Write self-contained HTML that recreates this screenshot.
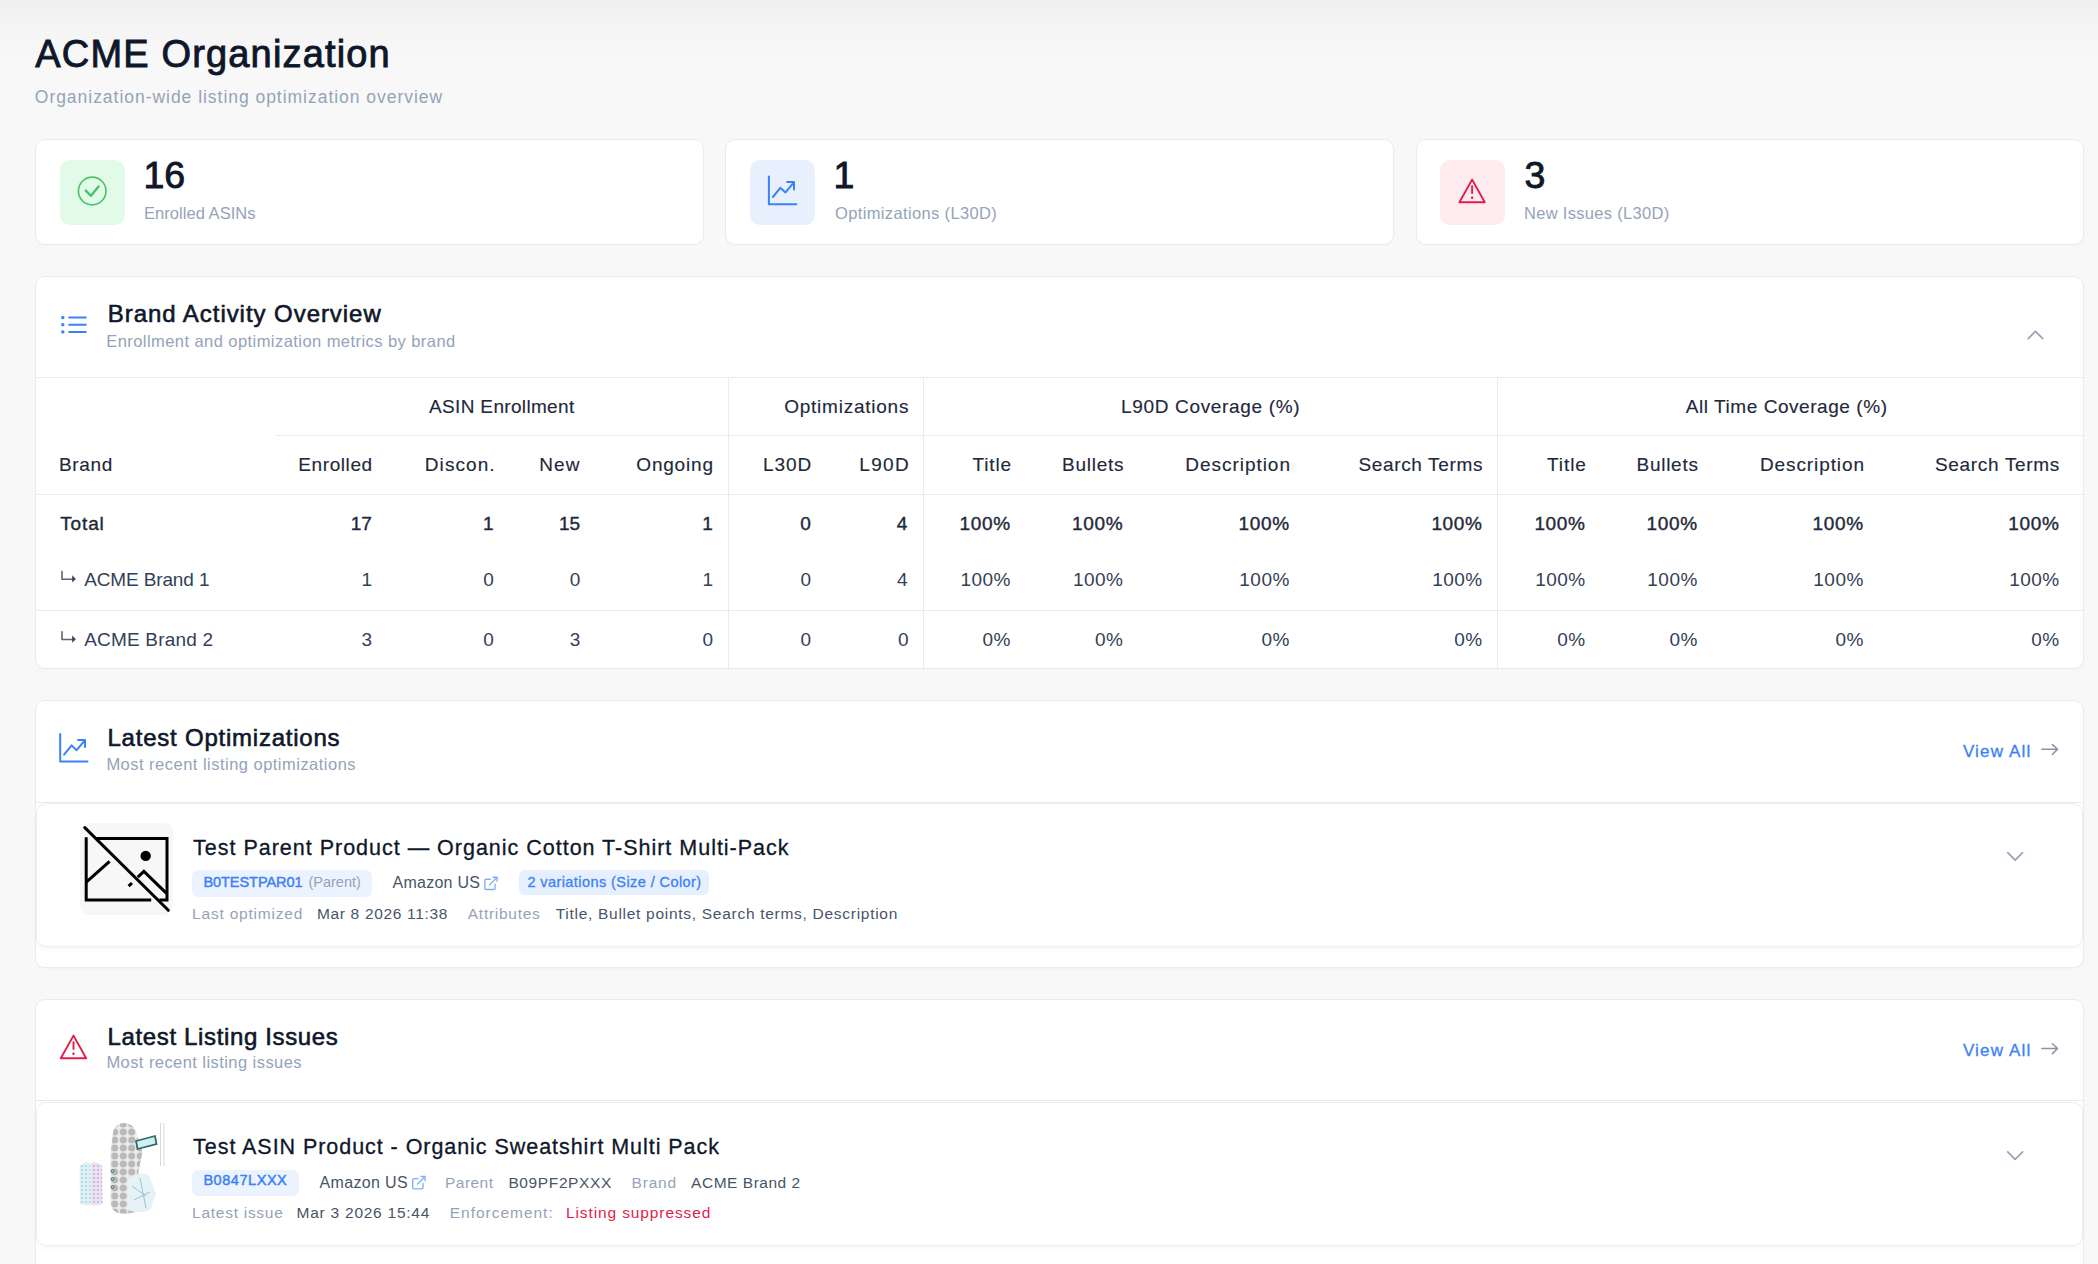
<!DOCTYPE html>
<html><head><meta charset="utf-8"><title>ACME Organization</title>
<style>
html,body{margin:0;padding:0;}
body{width:2098px;height:1264px;overflow:hidden;position:relative;font-family:"Liberation Sans", sans-serif;
background:linear-gradient(to bottom,#efeff0 0px,#f5f5f6 30px,#f8f8f8 60px,#f8f8f8 100%);}
.b{position:absolute;box-sizing:border-box;}
.t{position:absolute;white-space:nowrap;font-family:"Liberation Sans", sans-serif;}
.ov{position:absolute;left:0;top:0;}
</style></head><body>
<div class="b" style="left:35px;top:139px;width:668.5px;height:105.5px;background:#fff;border:1px solid #eaebef;border-radius:10px;box-sizing:border-box;box-shadow:0 1px 2px rgba(0,0,0,0.025);"></div><div class="b" style="left:725px;top:139px;width:669px;height:105.5px;background:#fff;border:1px solid #eaebef;border-radius:10px;box-sizing:border-box;box-shadow:0 1px 2px rgba(0,0,0,0.025);"></div><div class="b" style="left:1416px;top:139px;width:668px;height:105.5px;background:#fff;border:1px solid #eaebef;border-radius:10px;box-sizing:border-box;box-shadow:0 1px 2px rgba(0,0,0,0.025);"></div><div class="b" style="left:60px;top:160px;width:65px;height:65px;background:#e2fbe8;border-radius:10px;"></div><div class="b" style="left:750px;top:160px;width:65px;height:65px;background:#e8f0fd;border-radius:10px;"></div><div class="b" style="left:1440px;top:160px;width:65px;height:65px;background:#fdebf0;border-radius:10px;"></div><div class="b" style="left:35px;top:275.5px;width:2049px;height:393.0px;background:#fff;border:1px solid #eaebef;border-radius:10px;box-sizing:border-box;box-shadow:0 1px 2px rgba(0,0,0,0.025);"></div><div class="b" style="left:36px;top:376.5px;width:2047px;height:1.0px;background:#eaebef;"></div><div class="b" style="left:276px;top:435px;width:1807px;height:1px;background:#eaebef;"></div><div class="b" style="left:36px;top:493.5px;width:2047px;height:1.0px;background:#eaebef;"></div><div class="b" style="left:36px;top:610px;width:2047px;height:1px;background:#eaebef;"></div><div class="b" style="left:728px;top:377px;width:1px;height:291px;background:#eaebef;"></div><div class="b" style="left:923px;top:377px;width:1px;height:291px;background:#eaebef;"></div><div class="b" style="left:1497px;top:377px;width:1px;height:291px;background:#eaebef;"></div><div class="b" style="left:35px;top:700px;width:2049px;height:267.5px;background:#fff;border:1px solid #eaebef;border-radius:10px;box-sizing:border-box;box-shadow:0 1px 2px rgba(0,0,0,0.025);"></div><div class="b" style="left:36px;top:801.5px;width:2047px;height:1.0px;background:#eaebef;"></div><div class="b" style="left:37px;top:804px;width:2045px;height:142px;background:#fff;border-radius:9px;box-shadow:0 0 0 1px #eceef2, 0 4px 6px -1px rgba(0,0,0,0.035), 0 2px 4px -2px rgba(0,0,0,0.035);"></div><div class="b" style="left:80px;top:823px;width:93px;height:92px;background:#f7f7f8;border-radius:9px;"></div><div class="b" style="left:192.3px;top:870.4px;width:179.89999999999998px;height:26.700000000000045px;background:#edf3fe;border-radius:6px;"></div><div class="b" style="left:518.6px;top:870.3px;width:190.5px;height:25.200000000000045px;background:#e6effd;border-radius:6px;"></div><div class="b" style="left:35px;top:999.4px;width:2049px;height:300.6px;background:#fff;border:1px solid #eaebef;border-radius:10px;box-sizing:border-box;box-shadow:0 1px 2px rgba(0,0,0,0.025);"></div><div class="b" style="left:36px;top:1100.2px;width:2047px;height:1.0px;background:#eaebef;"></div><div class="b" style="left:37px;top:1103.4px;width:2045px;height:142.0999999999999px;background:#fff;border-radius:9px;box-shadow:0 0 0 1px #eceef2, 0 4px 6px -1px rgba(0,0,0,0.035), 0 2px 4px -2px rgba(0,0,0,0.035);"></div><div class="b" style="left:79px;top:1122px;width:94px;height:91px;background:#fff;border-radius:9px;"></div><div class="b" style="left:192.3px;top:1169.6px;width:107.0px;height:26.200000000000045px;background:#edf3fe;border-radius:6px;"></div>
<svg class="ov" width="2098" height="1264" viewBox="0 0 2098 1264"><circle cx="92.2" cy="191" r="13.8" fill="none" stroke="#4cc46a" stroke-width="1.7"/><path d="M85.8,190.6 L91,195.8 L98.6,186.4" fill="none" stroke="#45c565" stroke-width="2.4" stroke-linecap="round" stroke-linejoin="round" /><path d="M768.9,176.5 V204.2 H796.3" fill="none" stroke="#3b82f6" stroke-width="2" stroke-linecap="round" stroke-linejoin="round" /><path d="M772.9,197 L780.3,187.8 L785.5,192.4 L793.7,182.6" fill="none" stroke="#3b82f6" stroke-width="2" stroke-linecap="round" stroke-linejoin="round" /><path d="M787.2,182.1 H794 V189.6" fill="none" stroke="#3b82f6" stroke-width="2" stroke-linecap="round" stroke-linejoin="round" /><path d="M1472.1,179.6 L1484.8,202.2 L1459.3999999999999,202.2 Z" fill="none" stroke="#e11d48" stroke-width="1.9" stroke-linecap="round" stroke-linejoin="round" /><path d="M1472.1,186.2 V193.0" fill="none" stroke="#e11d48" stroke-width="1.9" stroke-linecap="round" stroke-linejoin="round" /><circle cx="1472.1" cy="197.79999999999998" r="1.25" fill="#e11d48"/><rect x="61.3" y="316.1" width="3" height="3" fill="#3b82f6"/><path d="M69.2,317.6 H85.8" fill="none" stroke="#3b82f6" stroke-width="2" stroke-linecap="round" stroke-linejoin="round" stroke-linecap="butt"/><rect x="61.3" y="323.2" width="3" height="3" fill="#3b82f6"/><path d="M69.2,324.7 H85.8" fill="none" stroke="#3b82f6" stroke-width="2" stroke-linecap="round" stroke-linejoin="round" stroke-linecap="butt"/><rect x="61.3" y="330.4" width="3" height="3" fill="#3b82f6"/><path d="M69.2,331.9 H85.8" fill="none" stroke="#3b82f6" stroke-width="2" stroke-linecap="round" stroke-linejoin="round" stroke-linecap="butt"/><path d="M62,571.5 V579.2 H73" fill="none" stroke="#5b6475" stroke-width="1.6" stroke-linecap="round" stroke-linejoin="round" stroke-linecap="butt"/><path d="M72.2,575.3 L75.8,578.9 L72.2,582.4 Z" fill="#3a4252"/><path d="M62,631.8 V639.5 H73" fill="none" stroke="#5b6475" stroke-width="1.6" stroke-linecap="round" stroke-linejoin="round" stroke-linecap="butt"/><path d="M72.2,635.5999999999999 L75.8,639.1999999999999 L72.2,642.6999999999999 Z" fill="#3a4252"/><path d="M2028.2,338.6 L2035.4,331.4 L2042.8,338.6" fill="none" stroke="#94a3b8" stroke-width="1.7" stroke-linecap="round" stroke-linejoin="round" /><path d="M60.2,734 V761.5 H87.5" fill="none" stroke="#3b82f6" stroke-width="2" stroke-linecap="round" stroke-linejoin="round" /><path d="M64.1,754.6 L71.6,745.4 L76.6,750.2 L84.4,740.9" fill="none" stroke="#3b82f6" stroke-width="2" stroke-linecap="round" stroke-linejoin="round" /><path d="M78,740 H85 V747" fill="none" stroke="#3b82f6" stroke-width="2" stroke-linecap="round" stroke-linejoin="round" /><path d="M2041.8,749.3 H2057.6 M2052.4,744.6 L2057.6,749.3 L2052.4,754.4" fill="none" stroke="#8b94a5" stroke-width="1.5" stroke-linecap="round" stroke-linejoin="round" /><path d="M2041.8,1048.5 H2057.6 M2052.4,1043.8 L2057.6,1048.5 L2052.4,1053.6" fill="none" stroke="#8b94a5" stroke-width="1.5" stroke-linecap="round" stroke-linejoin="round" /><path d="M2007.8,852.7 L2015.1,860.2 L2022.6,852.7" fill="none" stroke="#94a3b8" stroke-width="1.7" stroke-linecap="round" stroke-linejoin="round" /><path d="M2007.8,1151.9 L2015.1,1159.4 L2022.6,1151.9" fill="none" stroke="#94a3b8" stroke-width="1.7" stroke-linecap="round" stroke-linejoin="round" /><path d="M73.5,1035.6000000000001 L86.2,1058.2 L60.8,1058.2 Z" fill="none" stroke="#e11d48" stroke-width="1.9" stroke-linecap="round" stroke-linejoin="round" /><path d="M73.5,1042.2 V1049.0" fill="none" stroke="#e11d48" stroke-width="1.9" stroke-linecap="round" stroke-linejoin="round" /><circle cx="73.5" cy="1053.8" r="1.25" fill="#e11d48"/><g transform="translate(482.8,875.2) scale(0.6833333333333332)"><path d="M18 13v6a2 2 0 0 1-2 2H5a2 2 0 0 1-2-2V8a2 2 0 0 1 2-2h6 M15 3h6v6 M10 14 21 3" fill="none" stroke="#7fb0f7" stroke-width="2" stroke-linecap="round" stroke-linejoin="round"/></g><g transform="translate(410.7,1174.5) scale(0.6833333333333332)"><path d="M18 13v6a2 2 0 0 1-2 2H5a2 2 0 0 1-2-2V8a2 2 0 0 1 2-2h6 M15 3h6v6 M10 14 21 3" fill="none" stroke="#7fb0f7" stroke-width="2" stroke-linecap="round" stroke-linejoin="round"/></g><g fill="none" stroke="#000" stroke-width="3" stroke-linecap="butt"><path d="M95.2,838.5 H167 V900 H159.4"/><path d="M86.2,837.2 V900 H151.2"/><path d="M86,882.4 L109.6,861.3"/><path d="M128.6,886.2 L132,883"/><path d="M137.8,877.2 L143.9,871.4 L166.5,893.3"/><path d="M84.8,827.6 L168.3,910.3" stroke-linecap="round"/></g><circle cx="145.7" cy="855.9" r="5.2" fill="#000"/><defs><pattern id="pc" x="0" y="0" width="8.5" height="8" patternUnits="userSpaceOnUse"><rect width="8.5" height="8" fill="#ececec"/><circle cx="4.2" cy="4" r="3.6" fill="#b9b9b9"/></pattern><pattern id="ps" x="0" y="0" width="4" height="4" patternUnits="userSpaceOnUse"><rect width="4" height="4" fill="#dff1f5"/><circle cx="2" cy="2" r="1.1" fill="#a9d8e2"/></pattern><pattern id="pp" x="0" y="0" width="4" height="4" patternUnits="userSpaceOnUse"><rect width="4" height="4" fill="#ece2f1"/><circle cx="2" cy="2" r="1.1" fill="#c9b0d8"/></pattern></defs><g><path d="M79.5,1166 q4,-5 11,-3 L91,1205 q-6,1 -11,-1 Z" fill="url(#ps)"/><path d="M91,1163 q7,-2 11,3 L102.5,1204 q-5,2 -11.5,1 Z" fill="url(#pp)"/><path d="M113.5,1130 q4,-7 10,-7 q8,0 12,7 l3,10 l4,12 l-4,20 l-2,20 l-1,20 q-8,3 -18,1 q-7,-3 -7,-12 l0,-50 Z" fill="url(#pc)"/><path d="M136,1141 l19,-5 l1.5,8 l-19,5 Z" fill="#cfeff0" stroke="#2c6d68" stroke-width="1.8"/><path d="M128,1178 q10,-6 20,-4 l8,20 l-6,16 q-12,4 -22,0 Z" fill="#e6f2f6"/><path d="M132,1186 l14,10 M134,1200 l16,-8 M140,1178 l6,30" stroke="#8fc9cf" stroke-width="1" fill="none"/><path d="M160.5,1123 V1166 M164,1123 V1166" stroke="#cfcfcf" stroke-width="0.8"/><circle cx="112.5" cy="1171" r="1.5" fill="none" stroke="#3b7a78" stroke-width="0.9"/><circle cx="112.5" cy="1179" r="1.5" fill="none" stroke="#3b7a78" stroke-width="0.9"/><circle cx="112.5" cy="1187" r="1.5" fill="none" stroke="#3b7a78" stroke-width="0.9"/></g></svg>
<div class="t" style="left:35.30px;top:35px;font-size:38px;line-height:38px;font-weight:400;color:#0f172a;letter-spacing:1.164px;-webkit-text-stroke:0.9px #0f172a;">ACME Organization</div><div class="t" style="left:34.80px;top:89px;font-size:17.5px;line-height:17.5px;font-weight:400;color:#94a3b8;letter-spacing:0.968px;">Organization-wide listing optimization overview</div><div class="t" style="left:143.40px;top:157px;font-size:37.5px;line-height:37.5px;font-weight:400;color:#0f172a;letter-spacing:0.000px;-webkit-text-stroke:0.9px #0f172a;">16</div><div class="t" style="left:144.00px;top:205px;font-size:16.5px;line-height:16.5px;font-weight:400;color:#94a3b8;letter-spacing:0.044px;">Enrolled ASINs</div><div class="t" style="left:833.40px;top:157px;font-size:37.5px;line-height:37.5px;font-weight:400;color:#0f172a;letter-spacing:0.000px;-webkit-text-stroke:0.9px #0f172a;">1</div><div class="t" style="left:835.00px;top:205px;font-size:16.5px;line-height:16.5px;font-weight:400;color:#94a3b8;letter-spacing:0.359px;">Optimizations (L30D)</div><div class="t" style="left:1524.40px;top:157px;font-size:37.5px;line-height:37.5px;font-weight:400;color:#0f172a;letter-spacing:0.000px;-webkit-text-stroke:0.9px #0f172a;">3</div><div class="t" style="left:1524.00px;top:205px;font-size:16.5px;line-height:16.5px;font-weight:400;color:#94a3b8;letter-spacing:0.312px;">New Issues (L30D)</div><div class="t" style="left:107.80px;top:302px;font-size:24px;line-height:24px;font-weight:400;color:#0f172a;letter-spacing:0.947px;-webkit-text-stroke:0.6px #0f172a;">Brand Activity Overview</div><div class="t" style="left:106.20px;top:333px;font-size:16.5px;line-height:16.5px;font-weight:400;color:#94a3b8;letter-spacing:0.438px;">Enrollment and optimization metrics by brand</div><div class="t" style="left:429.10px;top:397px;font-size:19px;line-height:19px;font-weight:400;color:#1e293b;letter-spacing:0.331px;-webkit-text-stroke:0.15px #1e293b;">ASIN Enrollment</div><div class="t" style="left:784.20px;top:397px;font-size:19px;line-height:19px;font-weight:400;color:#1e293b;letter-spacing:0.759px;-webkit-text-stroke:0.15px #1e293b;">Optimizations</div><div class="t" style="left:1121.00px;top:397px;font-size:19px;line-height:19px;font-weight:400;color:#1e293b;letter-spacing:0.664px;-webkit-text-stroke:0.15px #1e293b;">L90D Coverage (%)</div><div class="t" style="left:1685.80px;top:397px;font-size:19px;line-height:19px;font-weight:400;color:#1e293b;letter-spacing:0.556px;-webkit-text-stroke:0.15px #1e293b;">All Time Coverage (%)</div><div class="t" style="left:58.90px;top:455px;font-size:19px;line-height:19px;font-weight:400;color:#1e293b;letter-spacing:0.692px;-webkit-text-stroke:0.15px #1e293b;">Brand</div><div class="t" style="left:298.30px;top:455px;font-size:19px;line-height:19px;font-weight:400;color:#1e293b;letter-spacing:0.594px;-webkit-text-stroke:0.15px #1e293b;">Enrolled</div><div class="t" style="left:424.80px;top:455px;font-size:19px;line-height:19px;font-weight:400;color:#1e293b;letter-spacing:1.071px;-webkit-text-stroke:0.15px #1e293b;">Discon.</div><div class="t" style="left:539.20px;top:455px;font-size:19px;line-height:19px;font-weight:400;color:#1e293b;letter-spacing:1.106px;-webkit-text-stroke:0.15px #1e293b;">New</div><div class="t" style="left:636.30px;top:455px;font-size:19px;line-height:19px;font-weight:400;color:#1e293b;letter-spacing:0.805px;-webkit-text-stroke:0.15px #1e293b;">Ongoing</div><div class="t" style="left:762.90px;top:455px;font-size:19px;line-height:19px;font-weight:400;color:#1e293b;letter-spacing:1.000px;-webkit-text-stroke:0.15px #1e293b;">L30D</div><div class="t" style="left:859.30px;top:455px;font-size:19px;line-height:19px;font-weight:400;color:#1e293b;letter-spacing:1.300px;-webkit-text-stroke:0.15px #1e293b;">L90D</div><div class="t" style="left:972.60px;top:455px;font-size:19px;line-height:19px;font-weight:400;color:#1e293b;letter-spacing:0.819px;-webkit-text-stroke:0.15px #1e293b;">Title</div><div class="t" style="left:1062.10px;top:455px;font-size:19px;line-height:19px;font-weight:400;color:#1e293b;letter-spacing:0.729px;-webkit-text-stroke:0.15px #1e293b;">Bullets</div><div class="t" style="left:1185.30px;top:455px;font-size:19px;line-height:19px;font-weight:400;color:#1e293b;letter-spacing:0.963px;-webkit-text-stroke:0.15px #1e293b;">Description</div><div class="t" style="left:1358.40px;top:455px;font-size:19px;line-height:19px;font-weight:400;color:#1e293b;letter-spacing:0.654px;-webkit-text-stroke:0.15px #1e293b;">Search Terms</div><div class="t" style="left:1547.00px;top:455px;font-size:19px;line-height:19px;font-weight:400;color:#1e293b;letter-spacing:0.919px;-webkit-text-stroke:0.15px #1e293b;">Title</div><div class="t" style="left:1636.50px;top:455px;font-size:19px;line-height:19px;font-weight:400;color:#1e293b;letter-spacing:0.729px;-webkit-text-stroke:0.15px #1e293b;">Bullets</div><div class="t" style="left:1760.00px;top:455px;font-size:19px;line-height:19px;font-weight:400;color:#1e293b;letter-spacing:0.893px;-webkit-text-stroke:0.15px #1e293b;">Description</div><div class="t" style="left:1935.00px;top:455px;font-size:19px;line-height:19px;font-weight:400;color:#1e293b;letter-spacing:0.682px;-webkit-text-stroke:0.15px #1e293b;">Search Terms</div><div class="t" style="left:60.20px;top:514px;font-size:19px;line-height:19px;font-weight:400;color:#1e293b;letter-spacing:0.872px;-webkit-text-stroke:0.4px #1e293b;">Total</div><div class="t" style="left:350.78px;top:514px;font-size:19px;line-height:19px;font-weight:400;color:#1e293b;letter-spacing:0.000px;-webkit-text-stroke:0.4px #1e293b;">17</div><div class="t" style="left:483.05px;top:514px;font-size:19px;line-height:19px;font-weight:400;color:#1e293b;letter-spacing:0.000px;-webkit-text-stroke:0.4px #1e293b;">1</div><div class="t" style="left:558.88px;top:514px;font-size:19px;line-height:19px;font-weight:400;color:#1e293b;letter-spacing:0.000px;-webkit-text-stroke:0.4px #1e293b;">15</div><div class="t" style="left:702.15px;top:514px;font-size:19px;line-height:19px;font-weight:400;color:#1e293b;letter-spacing:0.000px;-webkit-text-stroke:0.4px #1e293b;">1</div><div class="t" style="left:800.35px;top:514px;font-size:19px;line-height:19px;font-weight:400;color:#1e293b;letter-spacing:0.000px;-webkit-text-stroke:0.4px #1e293b;">0</div><div class="t" style="left:896.65px;top:514px;font-size:19px;line-height:19px;font-weight:400;color:#1e293b;letter-spacing:0.000px;-webkit-text-stroke:0.4px #1e293b;">4</div><div class="t" style="left:959.60px;top:514px;font-size:19px;line-height:19px;font-weight:400;color:#1e293b;letter-spacing:0.650px;-webkit-text-stroke:0.4px #1e293b;">100%</div><div class="t" style="left:1072.10px;top:514px;font-size:19px;line-height:19px;font-weight:400;color:#1e293b;letter-spacing:0.650px;-webkit-text-stroke:0.4px #1e293b;">100%</div><div class="t" style="left:1238.50px;top:514px;font-size:19px;line-height:19px;font-weight:400;color:#1e293b;letter-spacing:0.650px;-webkit-text-stroke:0.4px #1e293b;">100%</div><div class="t" style="left:1431.40px;top:514px;font-size:19px;line-height:19px;font-weight:400;color:#1e293b;letter-spacing:0.650px;-webkit-text-stroke:0.4px #1e293b;">100%</div><div class="t" style="left:1534.40px;top:514px;font-size:19px;line-height:19px;font-weight:400;color:#1e293b;letter-spacing:0.650px;-webkit-text-stroke:0.4px #1e293b;">100%</div><div class="t" style="left:1646.50px;top:514px;font-size:19px;line-height:19px;font-weight:400;color:#1e293b;letter-spacing:0.650px;-webkit-text-stroke:0.4px #1e293b;">100%</div><div class="t" style="left:1812.50px;top:514px;font-size:19px;line-height:19px;font-weight:400;color:#1e293b;letter-spacing:0.650px;-webkit-text-stroke:0.4px #1e293b;">100%</div><div class="t" style="left:2008.30px;top:514px;font-size:19px;line-height:19px;font-weight:400;color:#1e293b;letter-spacing:0.650px;-webkit-text-stroke:0.4px #1e293b;">100%</div><div class="t" style="left:84.20px;top:570px;font-size:19px;line-height:19px;font-weight:400;color:#334155;letter-spacing:-0.132px;">ACME Brand 1</div><div class="t" style="left:361.60px;top:570px;font-size:19px;line-height:19px;font-weight:400;color:#334155;letter-spacing:0.450px;">1</div><div class="t" style="left:483.30px;top:570px;font-size:19px;line-height:19px;font-weight:400;color:#334155;letter-spacing:0.450px;">0</div><div class="t" style="left:569.70px;top:570px;font-size:19px;line-height:19px;font-weight:400;color:#334155;letter-spacing:0.450px;">0</div><div class="t" style="left:702.40px;top:570px;font-size:19px;line-height:19px;font-weight:400;color:#334155;letter-spacing:0.450px;">1</div><div class="t" style="left:800.60px;top:570px;font-size:19px;line-height:19px;font-weight:400;color:#334155;letter-spacing:0.450px;">0</div><div class="t" style="left:896.90px;top:570px;font-size:19px;line-height:19px;font-weight:400;color:#334155;letter-spacing:0.450px;">4</div><div class="t" style="left:960.45px;top:570px;font-size:19px;line-height:19px;font-weight:400;color:#334155;letter-spacing:0.450px;">100%</div><div class="t" style="left:1072.95px;top:570px;font-size:19px;line-height:19px;font-weight:400;color:#334155;letter-spacing:0.450px;">100%</div><div class="t" style="left:1239.35px;top:570px;font-size:19px;line-height:19px;font-weight:400;color:#334155;letter-spacing:0.450px;">100%</div><div class="t" style="left:1432.25px;top:570px;font-size:19px;line-height:19px;font-weight:400;color:#334155;letter-spacing:0.450px;">100%</div><div class="t" style="left:1535.25px;top:570px;font-size:19px;line-height:19px;font-weight:400;color:#334155;letter-spacing:0.450px;">100%</div><div class="t" style="left:1647.35px;top:570px;font-size:19px;line-height:19px;font-weight:400;color:#334155;letter-spacing:0.450px;">100%</div><div class="t" style="left:1813.35px;top:570px;font-size:19px;line-height:19px;font-weight:400;color:#334155;letter-spacing:0.450px;">100%</div><div class="t" style="left:2009.15px;top:570px;font-size:19px;line-height:19px;font-weight:400;color:#334155;letter-spacing:0.450px;">100%</div><div class="t" style="left:84.20px;top:630px;font-size:19px;line-height:19px;font-weight:400;color:#334155;letter-spacing:0.195px;">ACME Brand 2</div><div class="t" style="left:361.60px;top:630px;font-size:19px;line-height:19px;font-weight:400;color:#334155;letter-spacing:0.450px;">3</div><div class="t" style="left:483.30px;top:630px;font-size:19px;line-height:19px;font-weight:400;color:#334155;letter-spacing:0.450px;">0</div><div class="t" style="left:569.70px;top:630px;font-size:19px;line-height:19px;font-weight:400;color:#334155;letter-spacing:0.450px;">3</div><div class="t" style="left:702.40px;top:630px;font-size:19px;line-height:19px;font-weight:400;color:#334155;letter-spacing:0.450px;">0</div><div class="t" style="left:800.60px;top:630px;font-size:19px;line-height:19px;font-weight:400;color:#334155;letter-spacing:0.450px;">0</div><div class="t" style="left:897.90px;top:630px;font-size:19px;line-height:19px;font-weight:400;color:#334155;letter-spacing:0.450px;">0</div><div class="t" style="left:982.48px;top:630px;font-size:19px;line-height:19px;font-weight:400;color:#334155;letter-spacing:0.450px;">0%</div><div class="t" style="left:1094.98px;top:630px;font-size:19px;line-height:19px;font-weight:400;color:#334155;letter-spacing:0.450px;">0%</div><div class="t" style="left:1261.38px;top:630px;font-size:19px;line-height:19px;font-weight:400;color:#334155;letter-spacing:0.450px;">0%</div><div class="t" style="left:1454.28px;top:630px;font-size:19px;line-height:19px;font-weight:400;color:#334155;letter-spacing:0.450px;">0%</div><div class="t" style="left:1557.28px;top:630px;font-size:19px;line-height:19px;font-weight:400;color:#334155;letter-spacing:0.450px;">0%</div><div class="t" style="left:1669.38px;top:630px;font-size:19px;line-height:19px;font-weight:400;color:#334155;letter-spacing:0.450px;">0%</div><div class="t" style="left:1835.38px;top:630px;font-size:19px;line-height:19px;font-weight:400;color:#334155;letter-spacing:0.450px;">0%</div><div class="t" style="left:2031.18px;top:630px;font-size:19px;line-height:19px;font-weight:400;color:#334155;letter-spacing:0.450px;">0%</div><div class="t" style="left:107.50px;top:726px;font-size:24px;line-height:24px;font-weight:400;color:#0f172a;letter-spacing:0.772px;-webkit-text-stroke:0.6px #0f172a;">Latest Optimizations</div><div class="t" style="left:106.40px;top:756px;font-size:16.5px;line-height:16.5px;font-weight:400;color:#94a3b8;letter-spacing:0.478px;">Most recent listing optimizations</div><div class="t" style="left:1962.90px;top:743px;font-size:17px;line-height:17px;font-weight:400;color:#3b82f6;letter-spacing:1.160px;-webkit-text-stroke:0.3px #3b82f6;">View All</div><div class="t" style="left:193.10px;top:838px;font-size:21.5px;line-height:21.5px;font-weight:400;color:#0f172a;letter-spacing:0.988px;-webkit-text-stroke:0.3px #0f172a;">Test Parent Product — Organic Cotton T-Shirt Multi-Pack</div><div class="t" style="left:203.40px;top:875px;font-size:14.5px;line-height:14.5px;font-weight:400;color:#3b82f6;letter-spacing:-0.049px;-webkit-text-stroke:0.45px #3b82f6;">B0TESTPAR01</div><div class="t" style="left:308.50px;top:875px;font-size:14.5px;line-height:14.5px;font-weight:400;color:#94a3b8;letter-spacing:-0.007px;">(Parent)</div><div class="t" style="left:392.50px;top:875px;font-size:16px;line-height:16px;font-weight:400;color:#475569;letter-spacing:0.251px;">Amazon US</div><div class="t" style="left:527.40px;top:875px;font-size:14.5px;line-height:14.5px;font-weight:400;color:#3b82f6;letter-spacing:0.421px;-webkit-text-stroke:0.3px #3b82f6;">2 variations (Size / Color)</div><div class="t" style="left:192.10px;top:906px;font-size:15.5px;line-height:15.5px;font-weight:400;color:#94a3b8;letter-spacing:0.791px;">Last optimized</div><div class="t" style="left:316.90px;top:906px;font-size:15.5px;line-height:15.5px;font-weight:400;color:#475569;letter-spacing:0.678px;">Mar 8 2026 11:38</div><div class="t" style="left:467.80px;top:906px;font-size:15.5px;line-height:15.5px;font-weight:400;color:#94a3b8;letter-spacing:0.720px;">Attributes</div><div class="t" style="left:555.70px;top:906px;font-size:15.5px;line-height:15.5px;font-weight:400;color:#475569;letter-spacing:0.716px;">Title, Bullet points, Search terms, Description</div><div class="t" style="left:107.50px;top:1025px;font-size:24px;line-height:24px;font-weight:400;color:#0f172a;letter-spacing:0.642px;-webkit-text-stroke:0.6px #0f172a;">Latest Listing Issues</div><div class="t" style="left:106.40px;top:1054px;font-size:16.5px;line-height:16.5px;font-weight:400;color:#94a3b8;letter-spacing:0.433px;">Most recent listing issues</div><div class="t" style="left:1962.90px;top:1042px;font-size:17px;line-height:17px;font-weight:400;color:#3b82f6;letter-spacing:1.160px;-webkit-text-stroke:0.3px #3b82f6;">View All</div><div class="t" style="left:193.10px;top:1137px;font-size:21.5px;line-height:21.5px;font-weight:400;color:#0f172a;letter-spacing:0.948px;-webkit-text-stroke:0.3px #0f172a;">Test ASIN Product - Organic Sweatshirt Multi Pack</div><div class="t" style="left:203.40px;top:1173px;font-size:14.5px;line-height:14.5px;font-weight:400;color:#3b82f6;letter-spacing:0.546px;-webkit-text-stroke:0.45px #3b82f6;">B0847LXXX</div><div class="t" style="left:319.50px;top:1175px;font-size:16px;line-height:16px;font-weight:400;color:#475569;letter-spacing:0.351px;">Amazon US</div><div class="t" style="left:445.00px;top:1175px;font-size:15.5px;line-height:15.5px;font-weight:400;color:#94a3b8;letter-spacing:0.468px;">Parent</div><div class="t" style="left:508.40px;top:1175px;font-size:15.5px;line-height:15.5px;font-weight:400;color:#475569;letter-spacing:0.620px;">B09PF2PXXX</div><div class="t" style="left:631.50px;top:1175px;font-size:15.5px;line-height:15.5px;font-weight:400;color:#94a3b8;letter-spacing:0.815px;">Brand</div><div class="t" style="left:691.10px;top:1175px;font-size:15.5px;line-height:15.5px;font-weight:400;color:#475569;letter-spacing:0.522px;">ACME Brand 2</div><div class="t" style="left:192.10px;top:1205px;font-size:15.5px;line-height:15.5px;font-weight:400;color:#94a3b8;letter-spacing:0.728px;">Latest issue</div><div class="t" style="left:296.60px;top:1205px;font-size:15.5px;line-height:15.5px;font-weight:400;color:#475569;letter-spacing:0.748px;">Mar 3 2026 15:44</div><div class="t" style="left:449.80px;top:1205px;font-size:15.5px;line-height:15.5px;font-weight:400;color:#94a3b8;letter-spacing:0.975px;">Enforcement:</div><div class="t" style="left:566.00px;top:1205px;font-size:15.5px;line-height:15.5px;font-weight:400;color:#e11d48;letter-spacing:0.887px;">Listing suppressed</div>
</body></html>
